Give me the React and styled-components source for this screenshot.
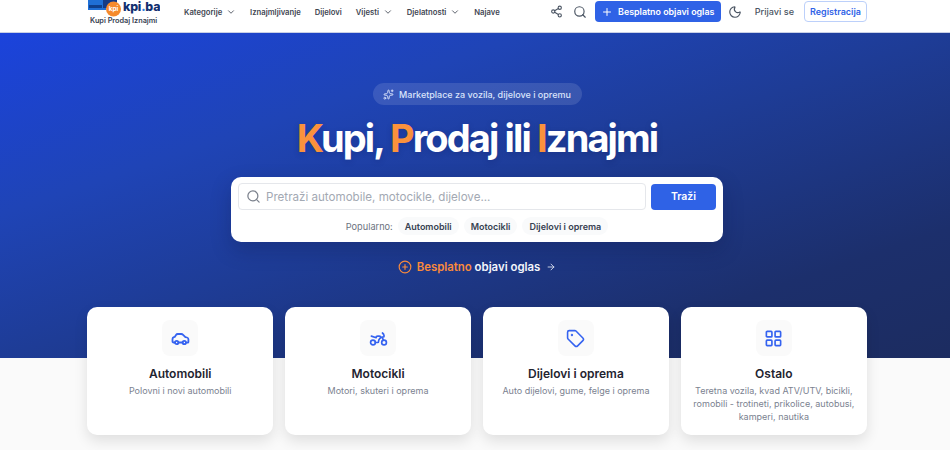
import React from "react";
import styled, { createGlobalStyle } from "styled-components";
import { ChevronDown, Share2, Search, Plus, Moon, Sparkles, CirclePlus, ArrowRight, Tag, LayoutGrid, Motorbike } from "lucide-react";

const Global = createGlobalStyle`
  html, body { margin: 0; padding: 0; background: #fafafa; }
  body { font-family: "Inter", "Liberation Sans", sans-serif; width: 950px; height: 450px; overflow: hidden; }
  * { box-sizing: border-box; }
`;

const Header = styled.header`
  height: 33px; background: #fff; border-bottom: 1px solid #c9d0e6;
  display: flex; align-items: flex-start; padding: 0 83px 0 88px; overflow: hidden;
`;
const Logo = styled.div`
  width: 72px; height: 32px; display: flex; flex-direction: column; align-items: flex-start; flex: none; overflow: hidden;
`;
const LogoTop = styled.div`
  display: flex; align-items: flex-start; height: 15px;
`;
const LogoName = styled.span`
  font-size: 12.4px; font-weight: 800; color: #12306f; letter-spacing: -0.2px; margin-left: 2px; line-height: 13px; white-space: nowrap;
  b { color: #2f7fe0; font-weight: 800; }
`;
const LogoTag = styled.span`
  font-size: 7.3px; font-weight: 600; color: #374151; white-space: nowrap; line-height: 10px; margin: 1px 0 0 2px;
`;
const Nav = styled.nav`
  display: flex; align-items: center; height: 24px; margin-left: 24px; gap: 13.9px;
`;
const NavItem = styled.span`
  display: flex; align-items: center; gap: 4px; font-size: 7.7px; font-weight: 600; color: #3f4652; white-space: nowrap;
`;
const Actions = styled.div`
  margin-left: auto; display: flex; align-items: center; height: 23px;
`;
const IconBtn = styled.span`
  display: flex; color: #4b5563; margin-right: ${p => p.$mr}px;
`;
const PostBtn = styled.span`
  height: 21px; width: 126px; border-radius: 4px; background: #2f62e6; color: #fff; font-size: 8.9px; font-weight: 600;
  display: flex; align-items: center; justify-content: center; gap: 5px; margin-right: 7px; white-space: nowrap;
`;
const Login = styled.span`
  font-size: 9.1px; font-weight: 500; color: #4b5563; margin: 0 10px 0 13px; white-space: nowrap;
`;
const Register = styled.span`
  width: 63px; height: 21px; border: 1px solid #bcd0fa; border-radius: 4px; color: #2f62e6; font-size: 9px; font-weight: 600;
  display: flex; align-items: center; justify-content: center; white-space: nowrap;
`;

const Hero = styled.section`
  height: 325px; padding: 50px 0 0 4px; display: flex; flex-direction: column; align-items: center;
  background: linear-gradient(to bottom right, #1b43dc 0%, #1f44b6 28%, #1e3c96 50%, #1c2f6c 80%, #1c2c60 100%);
`;
const Pill = styled.div`
  height: 22px; width: 209px; border-radius: 11px; background: rgba(255,255,255,.12); color: #dbe4fb;
  display: flex; align-items: center; justify-content: center; gap: 5px; font-size: 9px; font-weight: 500; white-space: nowrap;
`;
const Title = styled.h1`
  margin: 10px 0 0; font-size: 38px; line-height: 46px; font-weight: 700; color: #fff; letter-spacing: -1.88px; white-space: nowrap;
  text-shadow: 0 2px 6px rgba(10,20,70,.2);
  em { font-style: normal; color: #fb923c; }
`;
const SearchCard = styled.div`
  margin-top: 16px; width: 492px; height: 65px; background: #fff; border-radius: 10px; padding: 6px 7px;
  box-shadow: 0 8px 20px rgba(10,20,60,.25);
`;
const SearchRow = styled.div`
  display: flex; gap: 5px; align-items: center;
`;
const InputBox = styled.div`
  flex: 1; height: 27px; border: 1px solid #e5e7eb; border-radius: 4px; display: flex; align-items: center; gap: 5px; padding-left: 7px;
  color: #a3a9b3; font-size: 11.6px; white-space: nowrap;
  svg { color: #7b818c; }
`;
const SearchBtn = styled.span`
  width: 65px; height: 26px; background: #2f62e6; color: #fff; border-radius: 4px; font-size: 10.5px; font-weight: 600;
  display: flex; align-items: center; justify-content: center;
`;
const PopularRow = styled.div`
  display: flex; align-items: center; justify-content: center; margin-top: 7px; gap: 5px;
`;
const PopLabel = styled.span`
  font-size: 9.2px; color: #6b7280;
`;
const Chip = styled.span`
  height: 18px; padding: 0 7px; border-radius: 9px; background: #f9fafb; color: #374151; font-size: 9px; font-weight: 600;
  display: flex; align-items: center; white-space: nowrap;
`;
const Cta = styled.div`
  margin-top: 18px; display: flex; align-items: center; gap: 5px; font-size: 11.4px; font-weight: 600; color: #f3f5fb; white-space: nowrap;
  em { font-style: normal; color: #f98a3c; }
`;
const CtaIcon = styled.span`
  display: flex; color: ${p => p.$c};
  margin-left: ${p => p.$ml || 0}px;
`;
const Grid = styled.div`
  width: 780px; margin: -51px 0 0 87px; display: grid; grid-template-columns: repeat(4, 1fr); column-gap: 11.5px; position: relative;
`;
const Card = styled.div`
  height: 128px; background: #fff; border-radius: 10px; padding: 13px 8px 0; display: flex; flex-direction: column; align-items: center; text-align: center;
  box-shadow: 0 6px 14px rgba(0,0,0,.11);
`;
const IconTile = styled.div`
  width: 36px; height: 36px; border-radius: 8px; background: #fafafa; color: #3563f0; display: flex; align-items: center; justify-content: center;
`;
const CardTitle = styled.div`
  margin-top: 10px; font-size: 12px; line-height: 16px; font-weight: 600; color: #1f2430;
`;
const CardText = styled.div`
  margin-top: 3px; font-size: 9px; line-height: 12.8px; color: #7b8290;
`;

const LogoMark = () => (
  <svg width="33" height="17" viewBox="0 1 33 17">
    <path d="M0 1h15l3 3v7H0z" fill="#1f6fd6" />
    <path d="M1 6h13v3H1z" fill="#0f3f8c" />
    <path d="M15 0h14v9H15z" fill="#143a86" />
    <circle cx="25.5" cy="10" r="7.5" fill="#f58a2c" />
    <text x="25.5" y="12" fontSize="6.4" fontWeight="700" fill="#fff" textAnchor="middle" fontFamily="Inter">kpi</text>
  </svg>
);

const CarIcon = () => (
  <svg width="19" height="19" viewBox="0 0 19 19" fill="none" stroke="currentColor" strokeWidth="1.8" strokeLinecap="round" strokeLinejoin="round">
    <path d="M4 13.5H2.6c-.7 0-1.1-.5-1.1-1.1V10c0-.9.5-1.5 1.3-1.8l.9-.3 1.3-2c.4-.6 1-.9 1.7-.9h3.6c.7 0 1.3.3 1.8.8l2.3 2.3 1.6.4c.8.2 1.4.9 1.4 1.7v2.7c0 .4-.3.7-.7.7h-1.1" />
    <path d="M7.4 13.5h4.2" />
    <circle cx="5.7" cy="13.5" r="1.7" />
    <circle cx="13.3" cy="13.5" r="1.7" />
  </svg>
);

const cards = [
  { icon: <CarIcon />, t: "Automobili", d: "Polovni i novi automobili" },
  { icon: <Motorbike size={19} strokeWidth={2.1} />, t: "Motocikli", d: "Motori, skuteri i oprema" },
  { icon: <Tag size={19} strokeWidth={2} />, t: "Dijelovi i oprema", d: "Auto dijelovi, gume, felge i oprema" },
  { icon: <LayoutGrid size={19} strokeWidth={2.1} />, t: "Ostalo", d: "Teretna vozila, kvad ATV/UTV, bicikli, romobili - trotineti, prikolice, autobusi, kamperi, nautika" },
];

export default function App() {
  return (
    <>
      <Global />
      <Header>
        <Logo>
          <LogoTop><LogoMark /><LogoName>kpi<b>.</b>ba</LogoName></LogoTop>
          <LogoTag>Kupi Prodaj Iznajmi</LogoTag>
        </Logo>
        <Nav>
          <NavItem>Kategorije <ChevronDown size={10} /></NavItem>
          <NavItem>Iznajmljivanje</NavItem>
          <NavItem>Dijelovi</NavItem>
          <NavItem>Vijesti <ChevronDown size={10} /></NavItem>
          <NavItem>Djelatnosti <ChevronDown size={10} /></NavItem>
          <NavItem>Najave</NavItem>
        </Nav>
        <Actions>
          <IconBtn $mr={10}><Share2 size={13} /></IconBtn>
          <IconBtn $mr={8}><Search size={14} /></IconBtn>
          <PostBtn><Plus size={12} />Besplatno objavi oglas</PostBtn>
          <IconBtn $mr={0}><Moon size={14} /></IconBtn>
          <Login>Prijavi se</Login>
          <Register>Registracija</Register>
        </Actions>
      </Header>
      <Hero>
        <Pill><Sparkles size={11} />Marketplace za vozila, dijelove i opremu</Pill>
        <Title><em>K</em>upi, <em>P</em>rodaj ili <em>I</em>znajmi</Title>
        <SearchCard>
          <SearchRow>
            <InputBox><Search size={15} />Pretraži automobile, motocikle, dijelove...</InputBox>
            <SearchBtn>Traži</SearchBtn>
          </SearchRow>
          <PopularRow>
            <PopLabel>Popularno:</PopLabel>
            <Chip>Automobili</Chip>
            <Chip>Motocikli</Chip>
            <Chip>Dijelovi i oprema</Chip>
          </PopularRow>
        </SearchCard>
        <Cta>
          <CtaIcon $c="#f98a3c"><CirclePlus size={14} /></CtaIcon>
          <span><em>Besplatno</em> objavi oglas</span>
          <CtaIcon $c="#e5e9f5" $ml={1}><ArrowRight size={10} /></CtaIcon>
        </Cta>
      </Hero>
      <Grid>
        {cards.map(c => (
          <Card key={c.t}>
            <IconTile>{c.icon}</IconTile>
            <CardTitle>{c.t}</CardTitle>
            <CardText>{c.d}</CardText>
          </Card>
        ))}
      </Grid>
    </>
  );
}
